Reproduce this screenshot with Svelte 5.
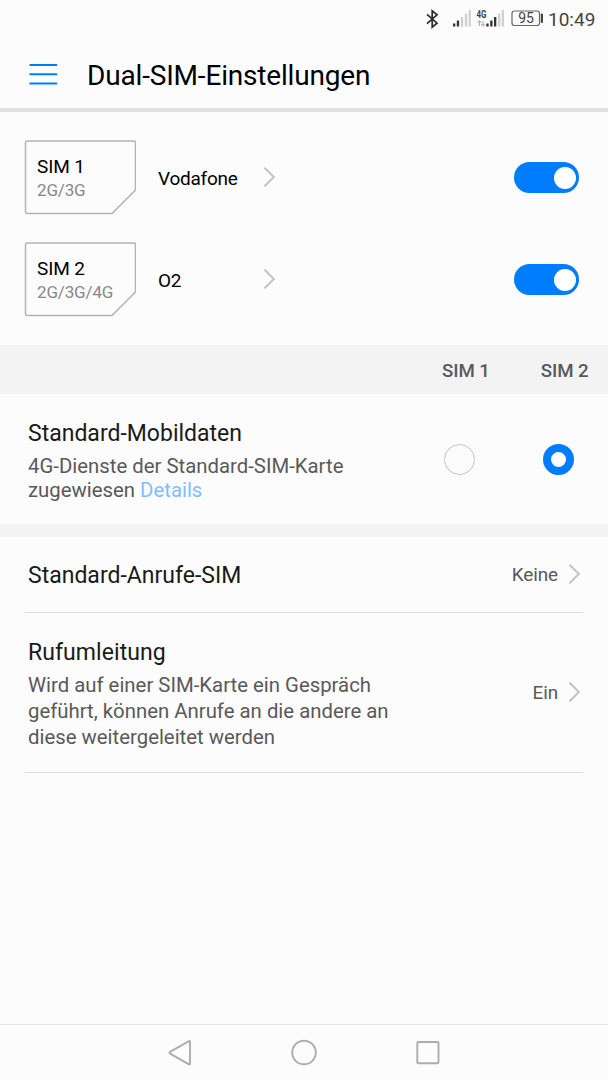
<script>
  const sims = $state([
    { name: 'SIM 1', bands: '2G/3G', carrier: 'Vodafone', on: true },
    { name: 'SIM 2', bands: '2G/3G/4G', carrier: 'O2', on: true }
  ]);
  let dataSim = $state(1);
</script>

{#snippet chevron()}
  <svg class="chevron" width="13" height="22" viewBox="0 0 13 22"><path d="M2 2.2 10.900 11 2 19.800" fill="none" stroke="#c3c3c3" stroke-width="2" stroke-linecap="round" /></svg>
{/snippet}

<div class="screen">
  <div class="status">
    <svg width="124" height="26" viewBox="0 0 124 26">
      <path d="M2 8.300 12 17.200 7.200 21.200V4.800L12 8.800 2 17.700" fill="none" stroke="#2b2b2b" stroke-width="1.700" />
      <g fill="#333">
        <rect x="28" y="17.500" width="2.300" height="3" />
        <rect x="31.800" y="14.500" width="2.300" height="6" />
      </g>
      <g fill="#d0d0d0">
        <rect x="35.800" y="11" width="2.300" height="9.500" />
        <rect x="39.800" y="7.500" width="2.300" height="13" />
        <rect x="43.600" y="4" width="2.300" height="16.500" />
      </g>
      <text class="net" x="51.500" y="11.500" textLength="10" lengthAdjust="spacingAndGlyphs">4G</text>
      <path d="M54.5 20v-5m-1.6 1.6 1.6-1.6 1.4 1.6M58 15v5m-1.6-1.6L58 20l1.6-1.6" fill="none" stroke="#b5b5b5" stroke-width="1.200" />
      <g fill="#333">
        <rect x="61.300" y="17.500" width="2.300" height="3" />
        <rect x="65.200" y="14.500" width="2.300" height="6" />
        <rect x="69" y="11" width="2.300" height="9.500" />
      </g>
      <g fill="#d0d0d0">
        <rect x="73" y="7.500" width="2.300" height="13" />
        <rect x="76.700" y="4" width="2.300" height="16.500" />
      </g>
      <rect x="87" y="5" width="27.500" height="14.500" rx="2.500" fill="none" stroke="#666" stroke-width="1.200" />
      <rect x="115.800" y="7.500" width="2.200" height="9.500" rx="1" fill="#444" />
      <text class="level" x="101" y="17.200" text-anchor="middle">95</text>
    </svg>
    <span class="time">10:49</span>
  </div>

  <header>
    <svg width="30" height="24" viewBox="0 0 30 24"><path d="M2.300 3h26M2.300 12.2h26M2.300 21.5h26" stroke="#007dff" stroke-width="2.1" stroke-linecap="round" /></svg>
    <h1>Dual-SIM-Einstellungen</h1>
  </header>

  <section class="sims">
    {#each sims as sim}
      <div class="sim">
        <div class="card">
          <svg width="112" height="75" viewBox="0 0 112 75"><path d="M3 1h107q1.500 0 1.500 1.500V50L88 73.500H3Q1.500 73.500 1.500 72V2.500Q1.500 1 3 1z" fill="none" stroke="#b2b2b2" stroke-width="1.500" /></svg>
          <div class="info">
            <span class="name">{sim.name}</span>
            <span class="bands">{sim.bands}</span>
          </div>
        </div>
        <span class="carrier">{sim.carrier}</span>
        {@render chevron()}
        <button class="switch" class:on={sim.on} aria-label={sim.name} onclick={() => (sim.on = !sim.on)}><i></i></button>
      </div>
    {/each}
  </section>

  <div class="columns">
    {#each sims as sim}<span>{sim.name}</span>{/each}
  </div>

  <section class="data">
    <div class="text">
      <h2>Standard-Mobildaten</h2>
      <p>4G-Dienste der Standard-SIM-Karte<br />zugewiesen <span class="link">Details</span></p>
    </div>
    <div class="radios">
      {#each sims as sim, i}
        <button class="radio" class:checked={dataSim === i} aria-label={sim.name} onclick={() => (dataSim = i)}></button>
      {/each}
    </div>
  </section>

  <div class="gap"></div>

  <section class="row calls">
    <h2>Standard-Anrufe-SIM</h2>
    <span class="value">Keine</span>
    {@render chevron()}
  </section>
  <section class="row forward">
    <div class="text">
      <h2>Rufumleitung</h2>
      <p>Wird auf einer SIM-Karte ein Gespräch<br />geführt, können Anrufe an die andere an<br />diese weitergeleitet werden</p>
    </div>
    <span class="value">Ein</span>
    {@render chevron()}
  </section>

  <nav>
    <svg width="28" height="28" viewBox="0 0 28 28"><path d="M24 2.500v22.500q-.3.800-1 .3L4 14.600q-1-.9 0-1.800l19-10.600q.7-.4 1 .3z" fill="none" stroke="#adadad" stroke-width="1.900" stroke-linejoin="round" /></svg>
    <svg width="28" height="28" viewBox="0 0 28 28"><circle cx="14" cy="13.500" r="11.800" fill="none" stroke="#adadad" stroke-width="1.900" /></svg>
    <svg width="28" height="28" viewBox="0 0 28 28"><rect x="3.300" y="3" width="21.200" height="21.200" rx="1" fill="none" stroke="#adadad" stroke-width="1.900" /></svg>
  </nav>
</div>

<style>
  :global(body) { margin: 0; background: #fcfcfc; }
  .screen { width: 608px; height: 1080px; display: flex; flex-direction: column; background: #fcfcfc; font-family: Roboto, sans-serif; color: #000; overflow: hidden; }
  h1, h2, p { margin: 0; font-weight: 400; }
  svg { display: block; flex: none; }
  button { padding: 0; box-sizing: border-box; }
  .status { height: 40px; box-sizing: border-box; padding: 6px 13px 0 0; display: flex; justify-content: flex-end; }
  .time { width: 47px; margin-left: -1px; font-size: 19px; line-height: 27px; color: #444; white-space: nowrap; }
  .net { font-size: 10.500px; font-weight: 700; fill: #444; }
  .level { font-size: 14px; fill: #444; }
  header { height: 68px; display: flex; align-items: center; padding-left: 28px; gap: 29px; border-bottom: 4px solid #e0e0e0; }
  h1 { padding-top: 3px; font-size: 28px; line-height: 32px; letter-spacing: -0.18px; white-space: nowrap; }
  .sims { height: 233px; box-sizing: border-box; padding: 28px 29px 0 24px; display: flex; flex-direction: column; gap: 27px; }
  .sim { height: 75px; display: flex; align-items: center; }
  .card { display: grid; width: 112px; height: 75px; }
  .card > * { grid-area: 1 / 1; }
  .info { padding: 15px 0 0 13px; display: flex; flex-direction: column; }
  .name { font-size: 19px; line-height: 23px; letter-spacing: -0.15px; }
  .bands { font-size: 17px; line-height: 24px; letter-spacing: -0.15px; color: #888; }
  .carrier { width: 105px; padding-left: 22px; padding-top: 1px; font-size: 19px; letter-spacing: -0.25px; }
  .sim .chevron { margin-top: -1px; }
  .switch { margin-left: auto; margin-right: 0.500px; width: 65px; height: 31px; border: 0; border-radius: 16px; background: #ccc; padding: 0 3px; display: flex; align-items: center; }
  .switch.on { background: #007dff; justify-content: flex-end; }
  .switch i { width: 22px; height: 22px; border-radius: 50%; background: #fff; }
  .columns { height: 49px; background: #f3f3f3; display: flex; justify-content: flex-end; align-items: center; gap: 51px; padding: 2px 19.500px 0 0; box-sizing: border-box; font-size: 18.700px; letter-spacing: -0.1px; font-weight: 500; color: #595959; }
  .data { height: 130px; box-sizing: border-box; padding: 0 34px 0 28px; display: flex; justify-content: space-between; }
  .data .text { padding-top: 26px; }
  h2 { font-size: 23px; line-height: 28px; color: #1a1a1a; white-space: nowrap; }
  .forward h2 { letter-spacing: 0.08px; }
  p { font-size: 20.350px; line-height: 24px; color: #595959; white-space: nowrap; }
  .data p { margin-top: 6px; }
  .link { color: #7fbeff; }
  .radios { display: flex; gap: 68px; align-items: center; }
  .radio { width: 31px; height: 31px; border-radius: 50%; border: 1.500px solid #c3c3c3; background: transparent; }
  .radio.checked { border: 8px solid #007dff; background: #fff; }
  .gap { height: 13px; background: #f3f3f3; }
  .row { margin: 0 25px; padding: 0 2.500px 0 3px; display: flex; align-items: center; border-bottom: 1px solid #dedede; }
  .calls { height: 75px; }
  .calls h2 { padding-top: 2px; }
  .forward { height: 159px; }
  .forward .text { padding-top: 3px; }
  .forward p { margin-top: 5px; line-height: 26px; }
  .value { margin-left: auto; margin-right: 9.500px; font-size: 18.900px; letter-spacing: -0.1px; color: #595959; }
  .row .chevron { margin-top: -1px; }
  nav { margin-top: auto; height: 55px; border-top: 1px solid #e4e4e4; display: flex; justify-content: center; align-items: center; gap: 96px; }
</style>
